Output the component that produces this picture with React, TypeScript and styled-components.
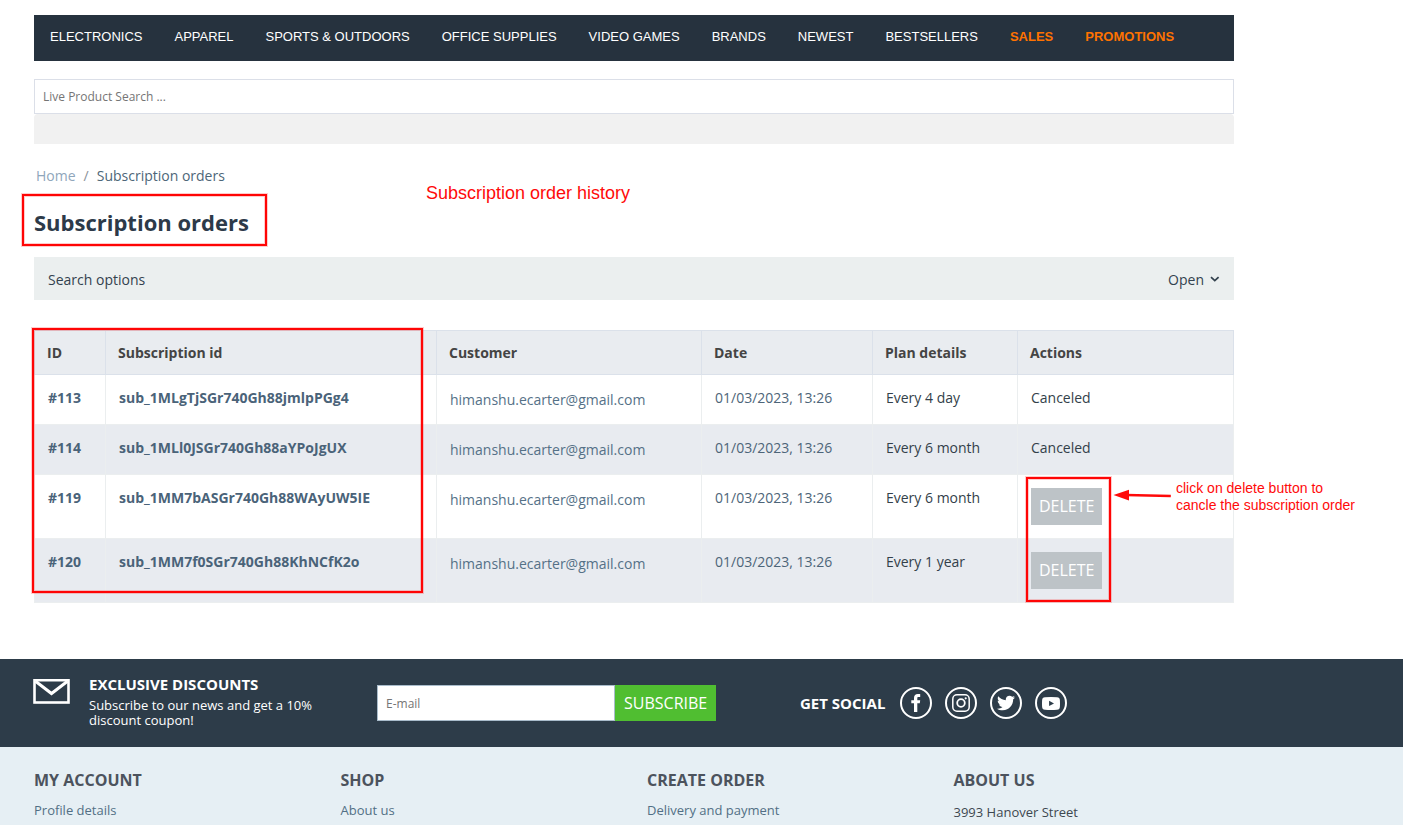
import React from "react";
import styled, { createGlobalStyle } from "styled-components";
import { FaTwitter } from "react-icons/fa";

const GlobalStyle = createGlobalStyle`
  *, *::before, *::after { box-sizing: border-box; }
  body {
    margin: 0;
    background: #fff;
    color: #333f4a;
    font-family: "Open Sans", sans-serif;
    font-size: 14px;
    line-height: 20px;
  }
  #root { min-height: 100vh; display: flex; flex-direction: column; }
  a { text-decoration: none; color: inherit; }
  button, input { font-family: inherit; border-radius: 0; margin: 0; }
`;

const Page = styled.div`
  position: relative;
  flex: 1;
  display: flex;
  flex-direction: column;
`;

const Main = styled.main`
  padding: 15px 169px 56px 34px;
`;

const NavBar = styled.nav`
  display: flex;
  gap: 32px;
  height: 46px;
  padding: 14px 16px;
  background: #26323e;
  font: 13px/15px "Liberation Sans", Arial, sans-serif;
`;

const NavLink = styled.a<{ $hot?: boolean }>`
  color: ${(p) => (p.$hot ? "#ff7200" : "#fff")};
  font-weight: ${(p) => (p.$hot ? 700 : 400)};
  white-space: nowrap;
`;

const SearchInput = styled.input`
  display: block;
  width: 100%;
  height: 35px;
  margin-top: 18px;
  padding: 0 8px;
  border: 1px solid #dbdfe8;
  background: #fff;
  font-size: 12px;
  &::placeholder { color: #757575; opacity: 1; }
`;

const GreyStrip = styled.div`
  height: 30px;
  border-radius: 4px 4px 0 0;
  background: #f1f1f1;
`;

const Breadcrumbs = styled.nav`
  display: flex;
  gap: 8px;
  margin-top: 22px;
  padding-left: 2px;
  color: #4d6678;
`;

const Crumb = styled.a`
  color: #8fa6bb;
`;

const CrumbSlash = styled.span`
  color: #8b9199;
`;

const Title = styled.h1`
  margin: 21px 0 0;
  color: #2d3a49;
  font-size: 22px;
  line-height: 30px;
  font-weight: 700;
`;

const OptionsBar = styled.section`
  display: flex;
  justify-content: space-between;
  align-items: center;
  height: 43px;
  margin-top: 20px;
  padding: 2px 14px 0;
  background: #ebefef;
  color: #33424e;
`;

const OpenButton = styled.button`
  display: flex;
  align-items: center;
  gap: 6px;
  padding: 0;
  border: 0;
  background: none;
  color: inherit;
  font-size: 14px;
  line-height: 20px;
`;

const OrdersTable = styled.table`
  width: 100%;
  margin-top: 30px;
  border-collapse: collapse;
  table-layout: fixed;
`;

const HeadCell = styled.th`
  height: 44px;
  padding: 0 12px;
  border: 1px solid #dbe1ea;
  background: #e9ecf0;
  color: #444;
  text-align: left;
  font-weight: 700;
`;

const Row = styled.tr<{ $tall?: boolean }>`
  height: ${(p) => (p.$tall ? 64 : 50)}px;
  &:nth-child(even) { background: #e8ebf0; }
`;

const Cell = styled.td`
  padding: 13px 13px 0;
  border: 1px solid #ebeeef;
  vertical-align: top;
  white-space: nowrap;
`;

const CustomerCell = styled(Cell)`
  padding-top: 15px;
  color: #557187;
`;

const StrongLink = styled.a`
  color: #4a6379;
  font-weight: 700;
`;

const DateText = styled.time`
  color: #4d6579;
`;

const DeleteButton = styled.button`
  display: block;
  height: 37px;
  padding: 0 8px;
  border: 0;
  background: #bdc3c7;
  color: #fff;
  font-size: 16px;
  line-height: 37px;
`;

const NewsBand = styled.section`
  height: 88px;
  padding: 0 169px 0 34px;
  display: grid;
  grid-template-columns: 343fr 423fr 434fr;
  align-items: start;
  background: #2d3c49;
  color: #fff;
`;

const Promo = styled.div`
  display: flex;
  gap: 18px;
  padding-top: 15px;
`;

const EnvelopeIcon = styled.svg`
  flex: none;
  margin: 5px 0 0 -1px;
`;

const PromoTitle = styled.h2`
  margin: 0 0 4px;
  font-size: 15px;
  line-height: 20px;
  font-weight: 700;
`;

const PromoText = styled.p`
  margin: 0;
  font-size: 13px;
  line-height: 15px;
`;

const MailForm = styled.form`
  display: flex;
  padding-top: 26px;
`;

const MailInput = styled.input`
  width: 238px;
  height: 36px;
  padding: 0 8px;
  border: 1px solid #a9bccb;
  background: #fff;
  font-size: 12px;
  &::placeholder { color: #757575; opacity: 1; }
`;

const SubscribeButton = styled.button`
  height: 36px;
  padding: 0 9px;
  border: 0;
  background: #50be31;
  color: #fff;
  font-size: 16px;
`;

const Social = styled.div`
  display: flex;
  align-items: center;
  gap: 13px;
  padding-top: 28px;
`;

const SocialTitle = styled.h2`
  margin: 0 2px 0 0;
  font-size: 15px;
  line-height: 20px;
  font-weight: 700;
`;

const SocialLink = styled.a`
  display: grid;
  place-items: center;
  width: 32px;
  height: 32px;
  border: 2px solid #fff;
  border-radius: 50%;
  color: #fff;
`;

const Footer = styled.footer`
  flex: 1;
  display: grid;
  grid-template-columns: repeat(4, 1fr);
  gap: 26px;
  padding: 22px 169px 4px 34px;
  background: #e6eff4;
`;

const FooterTitle = styled.h3`
  margin: 0 0 10px;
  color: #4c535d;
  font-size: 16px;
  line-height: 22px;
  font-weight: 700;
`;

const FooterLink = styled.a`
  display: block;
  color: #526f85;
  font-size: 13px;
  line-height: 18px;
`;

const Address = styled.address`
  padding-top: 2px;
  color: #3d4750;
  font-size: 13px;
  line-height: 18px;
  font-style: normal;
`;

const Marker = styled.div<{ $x: number; $y: number; $w: number; $h: number }>`
  position: absolute;
  left: ${(p) => p.$x}px;
  top: ${(p) => p.$y}px;
  width: ${(p) => p.$w}px;
  height: ${(p) => p.$h}px;
  border: 2px solid #ff0505;
  box-shadow: 0 0 0 1px rgba(255, 0, 0, 0.2), inset 0 0 0 1px rgba(255, 0, 0, 0.2);
  pointer-events: none;
`;

const Note = styled.p<{ $x: number; $y: number; $large?: boolean }>`
  position: absolute;
  left: ${(p) => p.$x}px;
  top: ${(p) => p.$y}px;
  margin: 0;
  color: #ff0a0a;
  font-family: "Liberation Sans", Arial, sans-serif;
  font-size: ${(p) => (p.$large ? 18 : 14)}px;
  line-height: ${(p) => (p.$large ? 20 : 17)}px;
  white-space: nowrap;
`;

const Arrow = styled.svg`
  position: absolute;
  left: 1112px;
  top: 486px;
`;

const navItems = [
  "ELECTRONICS", "APPAREL", "SPORTS & OUTDOORS", "OFFICE SUPPLIES",
  "VIDEO GAMES", "BRANDS", "NEWEST", "BESTSELLERS",
];

const columns: [string, number][] = [
  ["ID", 71], ["Subscription id", 331], ["Customer", 265],
  ["Date", 171], ["Plan details", 145], ["Actions", 216],
];

const orders = [
  { id: "#113", sub: "sub_1MLgTjSGr740Gh88jmlpPGg4", plan: "Every 4 day", active: false },
  { id: "#114", sub: "sub_1MLl0JSGr740Gh88aYPoJgUX", plan: "Every 6 month", active: false },
  { id: "#119", sub: "sub_1MM7bASGr740Gh88WAyUW5IE", plan: "Every 6 month", active: true },
  { id: "#120", sub: "sub_1MM7f0SGr740Gh88KhNCfK2o", plan: "Every 1 year", active: true },
];

const footerLinks = [
  ["MY ACCOUNT", "Profile details"],
  ["SHOP", "About us"],
  ["CREATE ORDER", "Delivery and payment"],
];

const FacebookIcon = () => (
  <svg width="10" height="18" viewBox="0 0 10 18" fill="currentColor">
    <path d="M9.2 0.1V3H7.6C6.5 3 6.3 3.5 6.3 4.3V6.2H9.2L8.8 9.2H6.3V18H3V9.2H0.3V6.2H3V3.9C3 1.4 4.5 0 6.8 0C7.9 0 8.9 0 9.2 0.1Z" />
  </svg>
);

const InstagramIcon = () => (
  <svg width="18" height="18" viewBox="0 0 18 18" fill="none" stroke="currentColor">
    <rect x="0.8" y="0.8" width="16.4" height="16.4" rx="4.2" strokeWidth="1.5" />
    <circle cx="9" cy="9" r="3.8" strokeWidth="1.8" />
    <circle cx="13.7" cy="4.3" r="1.1" fill="currentColor" stroke="none" />
  </svg>
);

const YouTubeIcon = () => (
  <svg width="18" height="13" viewBox="0 0 18 13" fill="currentColor">
    <path
      fillRule="evenodd"
      d="M3 0.2Q9 -0.2 15 0.2Q17.8 0.4 17.9 3.2Q18.1 6.5 17.9 9.8Q17.8 12.6 15 12.8Q9 13.2 3 12.8Q0.2 12.6 0.1 9.8Q-0.1 6.5 0.1 3.2Q0.2 0.4 3 0.2ZM7.1 3.8V9.1L12 6.5Z"
    />
  </svg>
);

export default function App() {
  return (
    <Page>
      <GlobalStyle />
      <Main>
        <NavBar>
          {navItems.map((n) => <NavLink href="#" key={n}>{n}</NavLink>)}
          <NavLink href="#" $hot>SALES</NavLink>
          <NavLink href="#" $hot>PROMOTIONS</NavLink>
        </NavBar>
        <SearchInput type="search" aria-label="Live Product Search" placeholder="Live Product Search ..." />
        <GreyStrip />
        <Breadcrumbs aria-label="Breadcrumb">
          <Crumb href="#">Home</Crumb>
          <CrumbSlash>/</CrumbSlash>
          <span>Subscription orders</span>
        </Breadcrumbs>
        <Title>Subscription orders</Title>
        <OptionsBar>
          <span>Search options</span>
          <OpenButton type="button">
            Open
            <svg width="10" height="8" viewBox="0 0 10 8" fill="none" stroke="currentColor" strokeWidth="1.8">
              <path d="M1 1.2 4.8 4.6 8.6 1.2" />
            </svg>
          </OpenButton>
        </OptionsBar>
        <OrdersTable>
          <colgroup>
            {columns.map(([name, w]) => <col key={name} style={{ width: `${w / 11.99}%` }} />)}
          </colgroup>
          <thead>
            <tr>{columns.map(([name]) => <HeadCell key={name} scope="col">{name}</HeadCell>)}</tr>
          </thead>
          <tbody>
            {orders.map((o) => (
              <Row key={o.id} $tall={o.active}>
                <Cell><StrongLink href="#">{o.id}</StrongLink></Cell>
                <Cell><StrongLink href="#">{o.sub}</StrongLink></Cell>
                <CustomerCell><a href="#">himanshu.ecarter@gmail.com</a></CustomerCell>
                <Cell><DateText>01/03/2023, 13:26</DateText></Cell>
                <Cell>{o.plan}</Cell>
                <Cell>{o.active ? <DeleteButton type="button">DELETE</DeleteButton> : "Canceled"}</Cell>
              </Row>
            ))}
          </tbody>
        </OrdersTable>
      </Main>

      <NewsBand>
        <Promo>
          <EnvelopeIcon width="38" height="26" viewBox="0 0 38 26" fill="none" stroke="#fff">
            <rect x="1.5" y="1.2" width="34" height="22.3" strokeWidth="2.6" />
            <path d="M2.5 2.2 18.5 14.5 34.5 2.2" strokeWidth="3" />
          </EnvelopeIcon>
          <div>
            <PromoTitle>EXCLUSIVE DISCOUNTS</PromoTitle>
            <PromoText>Subscribe to our news and get a 10%<br />discount coupon!</PromoText>
          </div>
        </Promo>
        <MailForm>
          <MailInput type="email" aria-label="E-mail" placeholder="E-mail" />
          <SubscribeButton type="button">SUBSCRIBE</SubscribeButton>
        </MailForm>
        <Social>
          <SocialTitle>GET SOCIAL</SocialTitle>
          <SocialLink href="#" aria-label="Facebook"><FacebookIcon /></SocialLink>
          <SocialLink href="#" aria-label="Instagram"><InstagramIcon /></SocialLink>
          <SocialLink href="#" aria-label="Twitter"><FaTwitter size={18} /></SocialLink>
          <SocialLink href="#" aria-label="YouTube"><YouTubeIcon /></SocialLink>
        </Social>
      </NewsBand>

      <Footer>
        {footerLinks.map(([title, link]) => (
          <div key={title}>
            <FooterTitle>{title}</FooterTitle>
            <FooterLink href="#">{link}</FooterLink>
          </div>
        ))}
        <div>
          <FooterTitle>ABOUT US</FooterTitle>
          <Address>3993 Hanover Street</Address>
        </div>
      </Footer>

      <Marker $x={22} $y={194} $w={245} $h={52} />
      <Marker $x={32} $y={328} $w={391} $h={265} />
      <Marker $x={1026} $y={477} $w={85} $h={125} />
      <Note $x={426} $y={183} $large>Subscription order history</Note>
      <Note $x={1176} $y={480}>click on delete button to<br />cancle the subscription order</Note>
      <Arrow width="60" height="18" viewBox="0 0 60 18" fill="#ff0a0a">
        <path d="M1.5 9 17 3.8V14.5Z" />
        <path d="M14 9 58.8 10" stroke="#ff0a0a" strokeWidth="2.6" />
      </Arrow>
    </Page>
  );
}
